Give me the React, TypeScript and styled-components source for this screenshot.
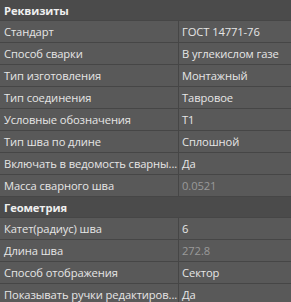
import styled, { createGlobalStyle } from "styled-components";

const GlobalStyle = createGlobalStyle`
  body {
    margin: 0;
    background: #595959;
    font-family: "Open Sans", "Noto Sans", sans-serif;
    font-size: 11.2px;
    letter-spacing: -0.1px;
  }
`;

interface Prop {
  name: string;
  value: string;
  muted?: boolean;
}

interface Group {
  title: string;
  props: Prop[];
}

// labels are shown the way the grid clips them
const groups: Group[] = [
  {
    title: "Реквизиты",
    props: [
      { name: "Стандарт", value: "ГОСТ 14771-76" },
      { name: "Способ сварки", value: "В углекислом газе" },
      { name: "Тип изготовления", value: "Монтажный" },
      { name: "Тип соединения", value: "Тавровое" },
      { name: "Условные обозначения", value: "Т1" },
      { name: "Тип шва по длине", value: "Сплошной" },
      { name: "Включать в ведомость сварны...", value: "Да" },
      { name: "Масса сварного шва", value: "0.0521", muted: true },
    ],
  },
  {
    title: "Геометрия",
    props: [
      { name: "Катет(радиус) шва", value: "6" },
      { name: "Длина шва", value: "272.8", muted: true },
      { name: "Способ отображения", value: "Сектор" },
      { name: "Показывать ручки редактиров...", value: "Да" },
    ],
  },
];

const Grid = styled.div`
  display: flex;
  flex-direction: column;
  width: 291px;
  background: #595959;
`;

const Header = styled.div`
  height: 20px;
  display: flex;
  align-items: center;
  padding-left: 4px;
  background: #4b4b4b;
  color: #efefef;
  font-weight: 700;
  border-bottom: 1px solid #464646;
`;

const Row = styled.div`
  display: grid;
  grid-template-columns: 178px 1fr;
  height: 21px;
  border-bottom: 1px solid #464646;
`;

const Cell = styled.div<{ $muted?: boolean }>`
  display: flex;
  align-items: center;
  min-width: 0;
  padding: 0 2px 0 4px;
  color: ${(p) => (p.$muted ? "#9a9a9a" : "#e6e6e6")};
  white-space: nowrap;
  overflow: hidden;

  & + & {
    border-left: 1px solid #464646;
    padding-left: 3px;
  }
`;

export default function App() {
  return (
    <>
      <GlobalStyle />
      <Grid>
        {groups.map((g) => (
          <div key={g.title}>
            <Header>{g.title}</Header>
            {g.props.map((p) => (
              <Row key={p.name}>
                <Cell>{p.name}</Cell>
                <Cell $muted={p.muted}>{p.value}</Cell>
              </Row>
            ))}
          </div>
        ))}
      </Grid>
    </>
  );
}
